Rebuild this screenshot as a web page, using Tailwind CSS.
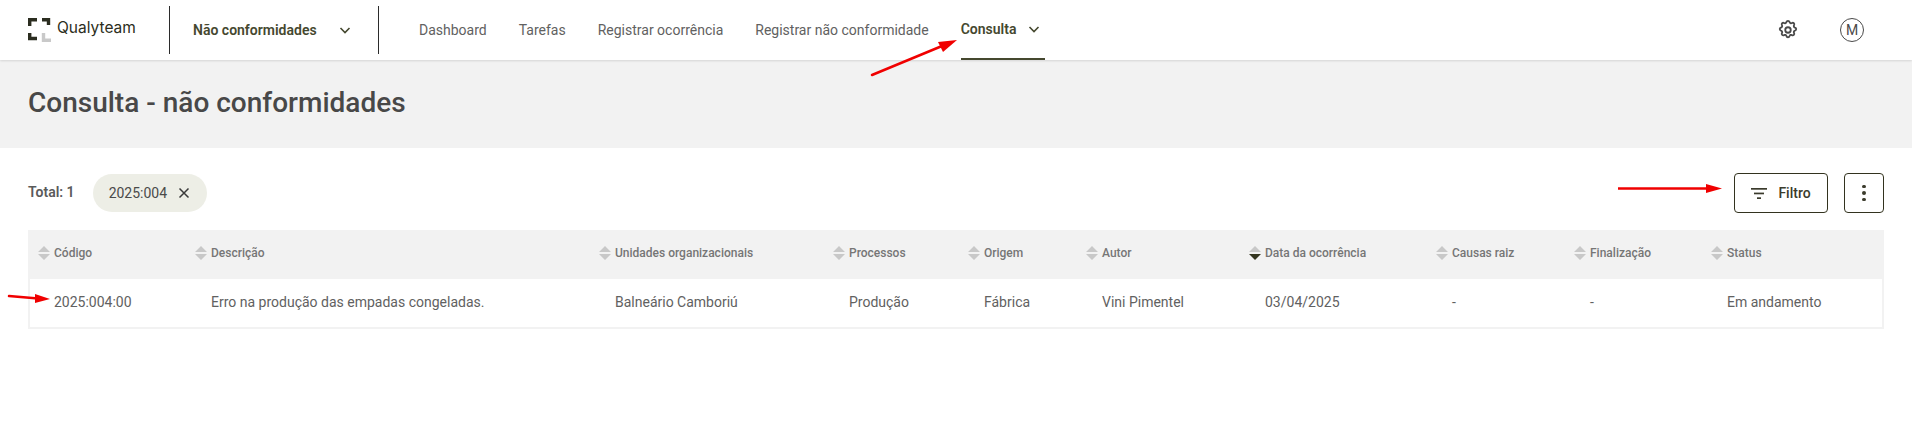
<!DOCTYPE html>
<html lang="pt-BR">

<head>
    <meta charset="UTF-8" />
    <title>Consulta - não conformidades</title>
    <script src="https://cdn.jsdelivr.net/npm/@tailwindcss/browser@4"></script>
</head>

<body class="relative bg-white h-[422px] overflow-hidden font-['Roboto',sans-serif] text-[#616161]">
    <!-- HEADER -->
    <header class="h-[60px] flex items-center bg-white shadow-[0_1px_2px_rgba(0,0,0,0.12)] relative">
        <div class="w-[169px] pl-[28px] flex items-center gap-[6px] shrink-0">
            <svg width="23" height="24" viewBox="0 0 23 24" fill="none" stroke-width="3.4">
                <path d="M1.7 8V1.7H9M14 1.7H20.5V7M1.7 15V20.5H9" stroke="#2b2d20" />
                <path d="M15.5 15V22.3H23" stroke="#c9c9c9" />
            </svg>
            <span class="font-['Inter',sans-serif] text-[15.5px] text-[#2b2d20] leading-none mb-[4px]">Qualyteam</span>
        </div>
        <div class="h-[48px] w-[210px] border-x border-[#2b2b2b] flex items-center pl-[23px] shrink-0">
            <span class="text-[14px] font-semibold text-[#45482f]">Não conformidades</span>
            <svg class="ml-[20px]" width="16" height="16" viewBox="0 0 16 16" fill="none" stroke="#45482f" stroke-width="1.6">
                <path d="M3.5 6L8 10.5L12.5 6" />
            </svg>
        </div>
        <nav class="flex items-center h-full text-[14px] ml-[40px]">
            <a class="mr-[32px]">Dashboard</a>
            <a class="mr-[32px]">Tarefas</a>
            <a class="mr-[32px]">Registrar ocorrência</a>
            <a class="mr-[32px]">Registrar não conformidade</a>
            <a class="h-full w-[84px] flex items-center border-b-2 border-[#45482f] font-semibold text-[#45482f]">
                Consulta
                <svg class="ml-[10px]" width="16" height="16" viewBox="0 0 16 16" fill="none" stroke="#45482f" stroke-width="1.6">
                    <path d="M3.5 6L8 10.5L12.5 6" />
                </svg>
            </a>
        </nav>
        <div class="ml-auto flex items-center gap-[41px] pr-[48px]">
            <svg width="22" height="22" viewBox="0 0 24 24" fill="none" stroke="#4a4a4a" stroke-width="2">
                <path d="M10.3 3.3c.4-1.7 2.9-1.7 3.4 0a1.7 1.7 0 0 0 2.6 1.1c1.5-.9 3.2.8 2.3 2.3a1.7 1.7 0 0 0 1 2.6c1.8.4 1.8 2.9 0 3.4a1.7 1.7 0 0 0-1 2.6c.9 1.5-.8 3.2-2.3 2.3a1.7 1.7 0 0 0-2.6 1c-.5 1.8-3 1.8-3.4 0a1.7 1.7 0 0 0-2.6-1c-1.5.9-3.2-.8-2.3-2.3a1.7 1.7 0 0 0-1.1-2.6c-1.7-.5-1.7-3 0-3.4a1.7 1.7 0 0 0 1.1-2.6c-.9-1.5.8-3.2 2.3-2.3a1.7 1.7 0 0 0 2.6-1.1z" />
                <circle cx="12" cy="12" r="3" />
            </svg>
            <div class="w-[24px] h-[24px] rounded-full border border-[#4a4a4a] flex items-center justify-center text-[14px] text-[#4a4a4a]">M</div>
        </div>
    </header>

    <!-- TITULO -->
    <section class="h-[88px] bg-[#f2f2f2] pl-[28px] flex items-center">
        <h1 class="text-[28px] font-medium text-[#484848] mb-[2px]">Consulta - não conformidades</h1>
    </section>

    <!-- FILTROS -->
    <section class="h-[82px] pl-[28px] pr-[28px] flex items-start pt-[25px]">
        <div class="h-[40px] flex items-center gap-[18px]">
            <span class="text-[14px] font-semibold text-[#5a5a5a] mb-[2px]">Total: 1</span>
            <span class="h-[38px] w-[114px] rounded-full bg-[#edeee6] flex items-center pl-[16px] gap-[11px] text-[14px] text-[#4a4a4a]">
                2025:004
                <svg width="12" height="12" viewBox="0 0 12 12" fill="none" stroke="#3a3a3a" stroke-width="1.5">
                    <path d="M1.5 1.5L10.5 10.5M10.5 1.5L1.5 10.5" />
                </svg>
            </span>
        </div>
        <div class="ml-auto flex items-center gap-[16px]">
            <button class="h-[40px] w-[94px] rounded-[4px] border border-[#33331f] flex items-center justify-center gap-[11px] text-[14px] font-medium text-[#3b3b2c]">
                <svg width="16" height="11" viewBox="0 0 16 11" fill="#3b3b2c">
                    <rect y="0" width="16" height="1.7" />
                    <rect x="3" y="4.6" width="10" height="1.7" />
                    <rect x="6" y="9.3" width="4" height="1.7" />
                </svg>
                Filtro
            </button>
            <button class="h-[40px] w-[40px] rounded-[4px] border border-[#33331f] flex flex-col items-center justify-center gap-[3px]">
                <span class="w-[3.5px] h-[3.5px] rounded-full bg-[#3b3b2c]"></span>
                <span class="w-[3.5px] h-[3.5px] rounded-full bg-[#3b3b2c]"></span>
                <span class="w-[3.5px] h-[3.5px] rounded-full bg-[#3b3b2c]"></span>
            </button>
        </div>
    </section>

    <!-- TABELA -->
    <section class="mx-[28px] border-x-2 border-b-2 border-[#f2f2f2]">
        <div class="grid grid-cols-[157px_404px_234px_135px_118px_163px_187px_138px_137px_1fr] h-[49px] -mx-[2px] bg-[#f2f2f2] items-center text-[12px] font-medium text-[#767676]">
            <span class="flex items-center gap-[4px] pl-[10px] pb-[3px]"><svg width="12" height="14" viewBox="0 0 12 14" fill="#c8c8c8"><path d="M6 0L12 6H0zM6 14L0 8H12z" /></svg>Código</span>
            <span class="flex items-center gap-[4px] pl-[10px] pb-[3px]"><svg width="12" height="14" viewBox="0 0 12 14" fill="#c8c8c8"><path d="M6 0L12 6H0zM6 14L0 8H12z" /></svg>Descrição</span>
            <span class="flex items-center gap-[4px] pl-[10px] pb-[3px]"><svg width="12" height="14" viewBox="0 0 12 14" fill="#c8c8c8"><path d="M6 0L12 6H0zM6 14L0 8H12z" /></svg>Unidades organizacionais</span>
            <span class="flex items-center gap-[4px] pl-[10px] pb-[3px]"><svg width="12" height="14" viewBox="0 0 12 14" fill="#c8c8c8"><path d="M6 0L12 6H0zM6 14L0 8H12z" /></svg>Processos</span>
            <span class="flex items-center gap-[4px] pl-[10px] pb-[3px]"><svg width="12" height="14" viewBox="0 0 12 14" fill="#c8c8c8"><path d="M6 0L12 6H0zM6 14L0 8H12z" /></svg>Origem</span>
            <span class="flex items-center gap-[4px] pl-[10px] pb-[3px]"><svg width="12" height="14" viewBox="0 0 12 14" fill="#c8c8c8"><path d="M6 0L12 6H0zM6 14L0 8H12z" /></svg>Autor</span>
            <span class="flex items-center gap-[4px] pl-[10px] pb-[3px]"><svg width="12" height="14" viewBox="0 0 12 14"><path d="M6 0L12 6H0z" fill="#c8c8c8" /><path d="M6 14L0 8H12z" fill="#33351f" /></svg>Data da ocorrência</span>
            <span class="flex items-center gap-[4px] pl-[10px] pb-[3px]"><svg width="12" height="14" viewBox="0 0 12 14" fill="#c8c8c8"><path d="M6 0L12 6H0zM6 14L0 8H12z" /></svg>Causas raiz</span>
            <span class="flex items-center gap-[4px] pl-[10px] pb-[3px]"><svg width="12" height="14" viewBox="0 0 12 14" fill="#c8c8c8"><path d="M6 0L12 6H0zM6 14L0 8H12z" /></svg>Finalização</span>
            <span class="flex items-center gap-[4px] pl-[10px] pb-[3px]"><svg width="12" height="14" viewBox="0 0 12 14" fill="#c8c8c8"><path d="M6 0L12 6H0zM6 14L0 8H12z" /></svg>Status</span>
        </div>
        <div class="grid grid-cols-[157px_404px_234px_135px_118px_163px_187px_138px_137px_1fr] h-[48px] -mx-[2px] items-center text-[14px] pb-[1px]">
            <span class="pl-[26px]">2025:004:00</span>
            <span class="pl-[26px]">Erro na produção das empadas congeladas.</span>
            <span class="pl-[26px]">Balneário Camboriú</span>
            <span class="pl-[26px]">Produção</span>
            <span class="pl-[26px]">Fábrica</span>
            <span class="pl-[26px]">Vini Pimentel</span>
            <span class="pl-[26px]">03/04/2025</span>
            <span class="pl-[26px]">-</span>
            <span class="pl-[26px]">-</span>
            <span class="pl-[26px]">Em andamento</span>
        </div>
    </section>

    <!-- SETAS VERMELHAS -->
    <svg class="absolute left-0 top-0 pointer-events-none" width="1912" height="422" viewBox="0 0 1912 422">
        <path d="M872 75L942 46" stroke="#f00000" stroke-width="2.5" stroke-linecap="round" />
        <path d="M957 40L943 52L938 42z" fill="#f00000" />
        <path d="M1618 188.5H1708" stroke="#f00000" stroke-width="2.5" />
        <path d="M1722 188.5L1706 184V193z" fill="#f00000" />
        <path d="M9 296L38 298.5" stroke="#f00000" stroke-width="2.5" stroke-linecap="round" />
        <path d="M50 299L35 294V303z" fill="#f00000" />
    </svg>
</body>

</html>
